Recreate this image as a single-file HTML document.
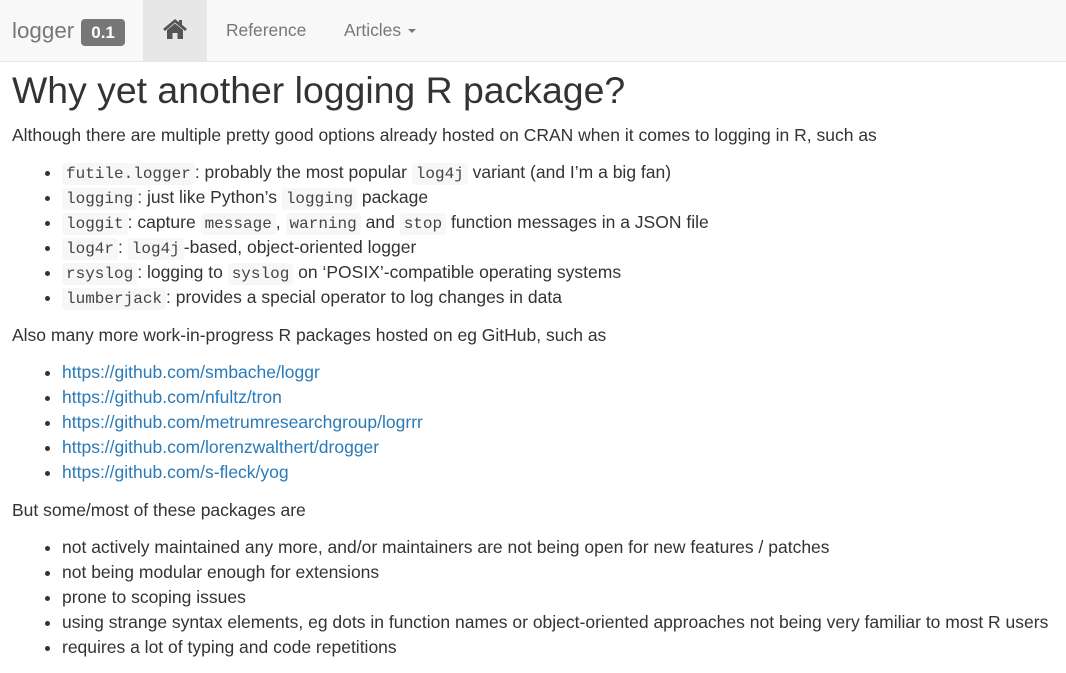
<!DOCTYPE html>
<html><head><meta charset="utf-8"><style>
body{margin:0;font-family:"Liberation Sans",sans-serif;font-size:17.5px;line-height:25px;color:#333;background:#fff;}
.nav{height:61px;background:#f8f8f8;border-bottom:1px solid #e7e7e7;position:relative;}
.brand{position:absolute;left:12px;top:17px;font-size:22.4px;color:#777;line-height:28px;}
.badge{display:inline-block;background:#777;color:#fff;font-size:17px;font-weight:bold;border-radius:4px;padding:0 10px;height:27px;line-height:28px;margin-left:7px;vertical-align:top;margin-top:2px}
.home{position:absolute;left:143px;top:0;width:64px;height:61px;background:#e7e7e7;}
.nl{position:absolute;top:19px;color:#777;font-size:17.4px;line-height:22px}
.caret{display:inline-block;border-left:4px solid transparent;border-right:4px solid transparent;border-top:4px solid #777;vertical-align:middle;margin-left:7px}
.main{padding:0 12px;}
h1{font-size:37.4px;font-weight:normal;margin:4px 0 0;line-height:48px;}
p{margin:9px 0 12px;}
ul{margin:0 0 13px;padding-left:50px;}
li{height:25px}
code{font-family:"Liberation Mono",monospace;font-size:16px;line-height:1;background:#f7f7f7;color:#444;padding:2px 4px;border-radius:3px}
a{color:#2a7ab8;text-decoration:none}
</style></head><body>
<div class="nav">
<div class="brand">logger<span class="badge">0.1</span></div>
<div class="home"><svg width="26" height="22" viewBox="0 0 26 22" style="position:absolute;left:19px;top:18px"><path d="M13 1 L1 11 L3 13 L13 4.5 L23 13 L25 11 L20 6.8 V2 H17 V4.3 Z" fill="#555"/><path d="M5 12 L13 5.5 L21 12 V21 H15.5 V15 H10.5 V21 H5 Z" fill="#555"/></svg></div>
<div class="nl" style="left:226px">Reference</div>
<div class="nl" style="left:344px">Articles<span class="caret"></span></div>
</div>
<div class="main">
<h1>Why yet another logging R package?</h1>
<p>Although there are multiple pretty good options already hosted on CRAN when it comes to logging in R, such as</p>
<ul>
<li><code>futile.logger</code>: probably the most popular <code>log4j</code> variant (and I’m a big fan)</li>
<li><code>logging</code>: just like Python’s <code>logging</code> package</li>
<li><code>loggit</code>: capture <code>message</code>, <code>warning</code> and <code>stop</code> function messages in a JSON file</li>
<li><code>log4r</code>: <code>log4j</code>-based, object-oriented logger</li>
<li><code>rsyslog</code>: logging to <code>syslog</code> on ‘POSIX’-compatible operating systems</li>
<li><code>lumberjack</code>: provides a special operator to log changes in data</li>
</ul>
<p>Also many more work-in-progress R packages hosted on eg GitHub, such as</p>
<ul>
<li><a>https://github.com/smbache/loggr</a></li>
<li><a>https://github.com/nfultz/tron</a></li>
<li><a>https://github.com/metrumresearchgroup/logrrr</a></li>
<li><a>https://github.com/lorenzwalthert/drogger</a></li>
<li><a>https://github.com/s-fleck/yog</a></li>
</ul>
<p>But some/most of these packages are</p>
<ul>
<li>not actively maintained any more, and/or maintainers are not being open for new features / patches</li>
<li>not being modular enough for extensions</li>
<li>prone to scoping issues</li>
<li>using strange syntax elements, eg dots in function names or object-oriented approaches not being very familiar to most R users</li>
<li>requires a lot of typing and code repetitions</li>
</ul>
</div>
</body></html>
